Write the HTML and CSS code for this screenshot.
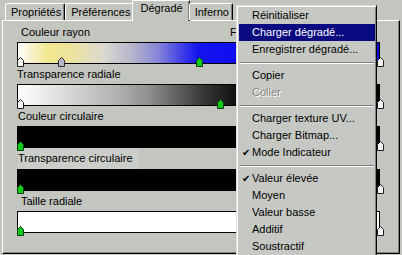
FILE: index.html
```html
<!DOCTYPE html>
<html lang="fr">
<head>
    <meta charset="UTF-8">
    <title>Dégradé</title>
    <link rel="stylesheet" href="styles.css">
</head>
<body>
    <div class="window">
        <div class="tabs">
            <div class="tab">Propriétés</div>
            <div class="tab">Préférences</div>
            <div class="tab active">Dégradé</div>
            <div class="tab">Inferno</div>
        </div>
        <div class="panel">
            <div class="label indent"><span>Couleur rayon</span><span class="extra">F</span></div>
            <div class="bar bar-rayon">
                <svg class="thumb" style="left:-1px" viewBox="0 0 7 10"><polygon class="t-white" points="0.5,9.5 0.5,3.5 3.5,0.5 6.5,3.5 6.5,9.5"/></svg>
                <svg class="thumb" style="left:40px" viewBox="0 0 7 10"><polygon class="t-gray" points="0.5,9.5 0.5,3.5 3.5,0.5 6.5,3.5 6.5,9.5"/></svg>
                <svg class="thumb" style="left:178px" viewBox="0 0 7 10"><polygon class="t-green" points="0.5,9.5 0.5,3.5 3.5,0.5 6.5,3.5 6.5,9.5"/></svg>
                <svg class="thumb" style="left:359px" viewBox="0 0 7 10"><polygon class="t-white" points="0.5,9.5 0.5,3.5 3.5,0.5 6.5,3.5 6.5,9.5"/></svg>
            </div>

            <div class="label"><span>Transparence radiale</span></div>
            <div class="bar bar-radiale">
                <svg class="thumb" style="left:-1px" viewBox="0 0 7 10"><polygon class="t-white" points="0.5,9.5 0.5,3.5 3.5,0.5 6.5,3.5 6.5,9.5"/></svg>
                <svg class="thumb" style="left:199px" viewBox="0 0 7 10"><polygon class="t-green" points="0.5,9.5 0.5,3.5 3.5,0.5 6.5,3.5 6.5,9.5"/></svg>
                <svg class="thumb" style="left:359px" viewBox="0 0 7 10"><polygon class="t-white" points="0.5,9.5 0.5,3.5 3.5,0.5 6.5,3.5 6.5,9.5"/></svg>
            </div>

            <div class="label small-indent"><span>Couleur circulaire</span></div>
            <div class="bar bar-black">
                <svg class="thumb" style="left:-1px" viewBox="0 0 7 10"><polygon class="t-green" points="0.5,9.5 0.5,3.5 3.5,0.5 6.5,3.5 6.5,9.5"/></svg>
                <svg class="thumb" style="left:359px" viewBox="0 0 7 10"><polygon class="t-white" points="0.5,9.5 0.5,3.5 3.5,0.5 6.5,3.5 6.5,9.5"/></svg>
            </div>

            <div class="label small-indent tall"><span class="soft">Transparence circulaire</span></div>
            <div class="bar bar-black">
                <svg class="thumb" style="left:-1px" viewBox="0 0 7 10"><polygon class="t-green" points="0.5,9.5 0.5,3.5 3.5,0.5 6.5,3.5 6.5,9.5"/></svg>
                <svg class="thumb" style="left:359px" viewBox="0 0 7 10"><polygon class="t-white" points="0.5,9.5 0.5,3.5 3.5,0.5 6.5,3.5 6.5,9.5"/></svg>
            </div>

            <div class="label indent"><span>Taille radiale</span></div>
            <div class="bar bar-white">
                <svg class="thumb" style="left:-1px" viewBox="0 0 7 10"><polygon class="t-green" points="0.5,9.5 0.5,3.5 3.5,0.5 6.5,3.5 6.5,9.5"/></svg>
                <svg class="thumb" style="left:359px" viewBox="0 0 7 10"><polygon class="t-white" points="0.5,9.5 0.5,3.5 3.5,0.5 6.5,3.5 6.5,9.5"/></svg>
            </div>
        </div>

        <div class="menu">
            <div class="item"><span class="check"></span>Réinitialiser</div>
            <div class="item selected"><span class="check"></span>Charger dégradé...</div>
            <div class="item"><span class="check"></span>Enregistrer dégradé...</div>
            <div class="sep"></div>
            <div class="item"><span class="check"></span>Copier</div>
            <div class="item disabled"><span class="check"></span>Coller</div>
            <div class="sep"></div>
            <div class="item"><span class="check"></span>Charger texture UV...</div>
            <div class="item"><span class="check"></span>Charger Bitmap...</div>
            <div class="item"><span class="check">✔</span>Mode Indicateur</div>
            <div class="sep"></div>
            <div class="item"><span class="check">✔</span>Valeur élevée</div>
            <div class="item"><span class="check"></span>Moyen</div>
            <div class="item"><span class="check"></span>Valeur basse</div>
            <div class="item"><span class="check"></span>Additif</div>
            <div class="item"><span class="check"></span>Soustractif</div>
        </div>
    </div>
</body>
</html>
```

FILE: styles.css
```css
body {
    margin: 0;
    font-family: "Liberation Sans", Arial, sans-serif;
    font-size: 11px;
    color: #000;
    background-color: #c3c5bf;
}
.window {
    position: relative;
    width: 402px;
    height: 255px;
    overflow: hidden;
    display: flex;
    flex-direction: column;
    background-color: #c3c5bf;
}

/* tabs */
.tabs {
    display: flex;
    align-items: flex-end;
    height: 20px;
    padding-left: 5px;
    position: relative;
    z-index: 2;
}
.tab {
    height: 16px;
    line-height: 16px;
    padding: 0 3px 0 5px;
    border-top: 1px solid #fff;
    border-left: 1px solid #fff;
    border-right: 1px solid #000;
    border-radius: 2px 2px 0 0;
    box-shadow: inset -1px 0 #808080;
}
.tab.active {
    height: 20px;
    line-height: 15px;
    margin: 0 -1px -1px -2px;
    padding: 0 6px 0 7px;
    background-color: #c3c5bf;
}

/* panel */
.panel {
    flex: 1;
    margin: 0 2px 1px 2px;
    padding: 1px 19px 0 14px;
    border-top: 1px solid #fff;
    border-left: 1px solid #fff;
    border-right: 1px solid #000;
    border-bottom: 1px solid #000;
    box-shadow: inset -1px -1px #808080;
    display: flex;
    flex-direction: column;
}
.label {
    height: 20px;
    line-height: 20px;
    display: flex;
    white-space: nowrap;
}
.label.indent {
    padding-left: 4px;
}
.label.small-indent {
    padding-left: 1px;
}
.label.tall {
    height: 21px;
}
.label .soft {
    background-color: #cacdc8;
    padding-right: 6px;
}
.label .extra {
    margin-left: auto;
    width: 150px;
}
.bar {
    position: relative;
    height: 22px;
    box-sizing: border-box;
    border: 1px solid #000;
}
.bar-rayon {
    background: linear-gradient(to right, #fff 0, #f8f4d8 10px, #f2e890 30px, #ece2a0 55px, #dcdad0 85px, #b4b4cc 115px, #8686d8 140px, #4444e6 162px, #1414f0 180px, #0808f0 250px, #1010d8 363px);
}
.bar-radiale {
    background: linear-gradient(to right, #fff 0, #e8e8e8 30px, #d0d0d0 60px, #b0b0b0 100px, #909090 130px, #606060 160px, #383838 185px, #202020 205px, #080808 225px, #000 260px);
}
.bar-black {
    background-color: #000;
}
.bar-white {
    background-color: #fff;
}
.thumb {
    position: absolute;
    top: 14px;
    width: 7px;
    height: 10px;
}
.t-white {
    fill: #f4f4f4;
    stroke: #202020;
    stroke-width: 1;
}
.t-gray {
    fill: #b8b8c8;
    stroke: #303030;
    stroke-width: 1;
}
.t-green {
    fill: #10c818;
    stroke: #00400a;
    stroke-width: 1;
}

/* popup menu */
.menu {
    position: absolute;
    left: 236px;
    top: 5px;
    width: 141px;
    height: 260px;
    box-sizing: border-box;
    padding: 1px 1px 0 2px;
    border: 1px solid;
    border-color: #dfdfdf #000 #000 #dfdfdf;
    box-shadow: inset 1px 1px #fff, inset -1px -1px #808080;
    background-color: #c6c9c3;
    z-index: 5;
}
.item {
    height: 17px;
    line-height: 17px;
    display: flex;
    white-space: nowrap;
}
.item .check {
    width: 13px;
    text-align: center;
    font-size: 10px;
}
.item.selected {
    background-color: #0a0a80;
    color: #fff;
}
.item.disabled {
    color: #868686;
    text-shadow: 1px 1px #fff;
}
.sep {
    height: 9px;
    margin: 0 1px;
    box-sizing: border-box;
    padding-top: 4px;
}
.sep::after {
    content: "";
    display: block;
    height: 1px;
    border-top: 1px solid #808080;
    background-color: #fff;
}
```
